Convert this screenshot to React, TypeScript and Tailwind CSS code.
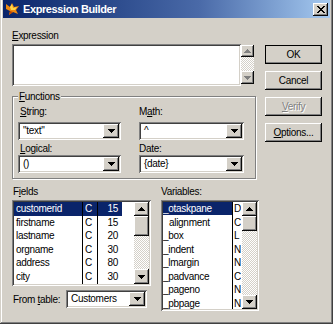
import type { ReactNode } from 'react';

const raised =
  'shadow-[inset_-1px_-1px_#0a0a0a,inset_1px_1px_#ffffff,inset_-2px_-2px_#808080,inset_2px_2px_#d4d0c8]';
const sunken =
  'shadow-[inset_1px_1px_#808080,inset_-1px_-1px_#ffffff,inset_2px_2px_#404040,inset_-2px_-2px_#d4d0c8]';
const checker =
  'bg-[repeating-conic-gradient(#ffffff_0_25%,#d4d0c8_0_50%)] bg-[length:2px_2px]';

function Arrow({ up, gray }: { up?: boolean; gray?: boolean }) {
  const fill = gray ? '#808080' : '#000000';
  const rows = up ? [3, 2, 1, 0] : [0, 1, 2, 3];
  return (
    <svg width="7" height="4" viewBox="0 0 7 4" shapeRendering="crispEdges">
      {rows.map((r, i) => (
        <rect key={i} x={r} y={i} width={7 - r * 2} height={1} fill={fill} />
      ))}
    </svg>
  );
}

function Combo({ value, className }: { value: string; className: string }) {
  return (
    <div className={`flex h-[18px] bg-white p-[2px] ${sunken} ${className}`}>
      <span className="flex-1 truncate pl-[3px] leading-[14px]">{value}</span>
      <div className={`flex h-[14px] w-[16px] items-center justify-center bg-[#d4d0c8] ${raised}`}>
        <Arrow />
      </div>
    </div>
  );
}

function ScrollBar({ thumb, up, down }: { thumb: string; up: string; down: string }) {
  return (
    <div className="flex w-[15px] flex-col bg-[#d4d0c8]">
      <div className={`flex ${up} items-center justify-center ${raised}`}>
        <Arrow up />
      </div>
      <div className={`${thumb} bg-[#d4d0c8] ${raised}`} />
      <div className={`flex-1 ${checker}`} />
      <div className={`flex ${down} items-center justify-center ${raised}`}>
        <Arrow />
      </div>
    </div>
  );
}

function Button({ children, isDefault, disabled }: { children: ReactNode; isDefault?: boolean; disabled?: boolean }) {
  return (
    <div
      className={`flex h-[19px] w-[57px] items-center justify-center bg-[#d4d0c8] ${raised} ${
        isDefault ? 'outline outline-1 -outline-offset-1 outline-black' : ''
      } ${disabled ? 'text-[#808080] [text-shadow:1px_1px_0_#ffffff]' : ''}`}
    >
      {children}
    </div>
  );
}

const fields = [
  ['customerid', 'C', '15'],
  ['firstname', 'C', '15'],
  ['lastname', 'C', '20'],
  ['orgname', 'C', '30'],
  ['address', 'C', '80'],
  ['city', 'C', '30'],
];

const variables = [
  ['_otaskpane', 'D'],
  ['alignment', 'C'],
  ['_box', 'L'],
  ['_indent', 'N'],
  ['_lmargin', 'N'],
  ['_padvance', 'C'],
  ['_pageno', 'N'],
  ['_pbpage', 'N'],
];

export default function App() {
  return (
    <div className="h-[324px] w-[333px] overflow-hidden bg-[#d4d0c8] px-[3px] font-['Liberation_Sans',Arial,sans-serif] text-[10px] tracking-[-0.3px] text-black shadow-[inset_-1px_-1px_#404040,inset_1px_0_#d4d0c8,inset_-2px_-2px_#808080,inset_2px_0_#ffffff]">
      {/* title bar */}
      <div className="flex h-[18px] items-center bg-linear-to-r from-[#0a246a] via-[#4a6aa8] via-60% to-[#a6caf0]">
        <svg width="16" height="16" viewBox="0 0 16 16" className="ml-[2px]">
          <path d="M1 3 L5 6 L7 2 L9 6 L14 5 L11 9 L13 13 L8 11 L4 14 L5 10 L1 8 Z" fill="#f08a10" />
          <path d="M5 6 L7 3 L8 7 L12 6 L10 9 L6 9 Z" fill="#ffd84a" />
          <path d="M4 14 L5 10 L8 11 Z" fill="#c04800" />
        </svg>
        <span className="ml-[2px] text-[11px] font-bold tracking-[-0.4px] text-white">Expression Builder</span>
        <div className={`ml-auto mr-[2px] flex h-[13px] w-[15px] items-center justify-center bg-[#d4d0c8] ${raised}`}>
          <svg width="8" height="7" viewBox="0 0 8 7" shapeRendering="crispEdges">
            <path d="M0 0h2v1h-2zM6 0h2v1h-2zM1 1h2v1h-2zM5 1h2v1h-2zM2 2h4v1h-4zM3 3h2v1h-2zM2 4h4v1h-4zM1 5h2v1h-2zM5 5h2v1h-2zM0 6h2v1h-2zM6 6h2v1h-2z" fill="#000" />
          </svg>
        </div>
      </div>

      <div className="flex pl-[9px]">
        {/* left column */}
        <div className="flex w-[247px] flex-col">
          <div className="mt-[11px] h-[13px] leading-[13px]">
            <span className="underline">E</span>xpression
          </div>
          <div className="mt-[2px] flex">
            <div className={`h-[42px] w-[229px] bg-white ${sunken}`} />
            <div className="mt-[1px] flex h-[39px] w-[13px] flex-col">
              <div className={`flex h-[12px] items-center justify-center bg-[#d4d0c8] ${raised}`}>
                <Arrow up gray />
              </div>
              <div className={`flex-1 ${checker}`} />
              <div className={`flex h-[13px] items-center justify-center bg-[#d4d0c8] ${raised}`}>
                <Arrow gray />
              </div>
            </div>
          </div>

          {/* functions group */}
          <div className="relative mt-[10px] h-[83px] w-[244px] border border-[#808080] pl-[5px] pt-[8px] shadow-[inset_1px_1px_#ffffff,1px_1px_#ffffff]">
            <span className="absolute -top-[7px] left-[5px] bg-[#d4d0c8] px-[1px] leading-[13px]">
              <span className="underline">F</span>unctions
            </span>
            <div className="grid grid-cols-[103px_105px] gap-x-[18px]">
              <div className="flex flex-col">
                <div className="h-[13px] pl-[2px] leading-[13px]">
                  <span className="underline">S</span>tring:
                </div>
                <Combo value={'"text"'} className="mt-[4px] w-[103px]" />
                <div className="mt-[2px] h-[13px] pl-[2px] leading-[13px]">
                  <span className="underline">L</span>ogical:
                </div>
                <Combo value="()" className="w-[103px]" />
              </div>
              <div className="flex flex-col">
                <div className="h-[13px] leading-[13px]">
                  M<span className="underline">a</span>th:
                </div>
                <Combo value="^" className="mt-[4px] w-[105px]" />
                <div className="mt-[2px] h-[13px] leading-[13px]">Date:</div>
                <Combo value="{date}" className="w-[105px]" />
              </div>
            </div>
          </div>

          {/* fields / variables */}
          <div className="mt-[6px] flex gap-[10px]">
            <div className="flex w-[139px] flex-col">
              <div className="h-[13px] pl-[1px] leading-[13px]">
                F<span className="underline">i</span>elds
              </div>
              <div className={`mt-[2px] flex h-[86px] bg-white p-[2px] ${sunken}`}>
                <div className="relative flex-1">
                  <div className="absolute bottom-0 left-[68px] top-0 w-px bg-black" />
                  <div className="absolute bottom-0 left-[83px] top-0 w-px bg-black" />
                  {fields.map(([n, t, l], i) => (
                    <div
                      key={n}
                      className={`flex h-[13.5px] w-[108px] items-center leading-[13px] ${
                        i === 0 ? 'bg-[#0a246a] text-white' : ''
                      }`}
                    >
                      <span className="w-[68px] pl-[2px]">{n}</span>
                      <span className="w-[15px] pl-[3px]">{t}</span>
                      <span className="w-[25px] pr-[4px] text-right">{l}</span>
                    </div>
                  ))}
                </div>
                <ScrollBar thumb="h-[20px]" up="h-[14px]" down="h-[15px]" />
              </div>
              <div className="mt-[4px] flex items-center">
                <span className="w-[54px] pl-[1px]">
                  From <span className="underline">t</span>able:
                </span>
                <Combo value="Customers" className="w-[81px]" />
              </div>
            </div>

            <div className="flex w-[98px] flex-col">
              <div className="h-[13px] leading-[13px]">Variables:</div>
              <div className={`mt-[2px] flex h-[111px] bg-white p-[2px] ${sunken}`}>
                <div className="relative flex-1 overflow-hidden">
                  <div className="absolute bottom-0 left-[69px] top-0 w-px bg-black" />
                  {variables.map(([n, t], i) => (
                    <div key={n} className="flex h-[13.5px] items-center leading-[13px]">
                      <span
                        className={`w-[69px] ${i === 0 ? 'bg-[#0a246a] text-white' : ''} ${
                          i === 1 ? 'pl-[6px]' : ''
                        }`}
                      >
                        {n}
                      </span>
                      <span className="w-[9px] overflow-hidden pl-[2px]">{t}</span>
                    </div>
                  ))}
                </div>
                <ScrollBar thumb="h-[15px]" up="h-[14px]" down="h-[14px]" />
              </div>
            </div>
          </div>
        </div>

        {/* buttons */}
        <div className="ml-[6px] mt-[27px] flex w-[57px] flex-col gap-[7px]">
          <Button isDefault>OK</Button>
          <Button>Cancel</Button>
          <Button disabled>
            <span>
              <span className="underline">V</span>erify
            </span>
          </Button>
          <Button>
            <span>
              <span className="underline">O</span>ptions...
            </span>
          </Button>
        </div>
      </div>
    </div>
  );
}
